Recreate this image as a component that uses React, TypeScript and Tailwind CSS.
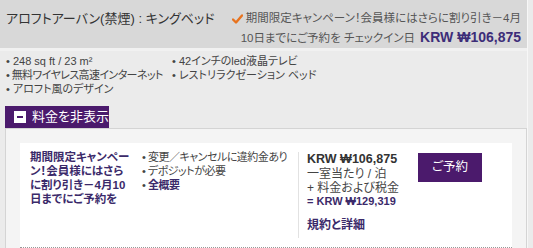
import React from "react";

const jp = "font-['Liberation_Sans','Noto_Sans_CJK_JP',sans-serif] [font-feature-settings:'palt']";

export default function App() {
  return (
    <div className={`w-[533px] h-[248px] overflow-hidden bg-[#ebebeb] text-[#333] ${jp}`}>
      <div className="w-[528px] h-full border-r border-[#f7f7f7]">
        {/* header */}
        <div className="h-[48px] bg-[#d8d8d8] flex justify-between pl-[6px] pr-[6px]">
          <div className="pt-[9px] text-[13px] whitespace-nowrap text-[#333]">アロフトアーバン(禁煙) : キングベッド</div>
          <div className="flex flex-col items-end pt-[9px] text-[11.5px] leading-[19px] text-[#555] whitespace-nowrap">
            <div className="flex items-center">
              <svg width="11" height="10" viewBox="0 0 11 10" className="mr-[3px]">
                <path d="M1 5.5 L4 8.5 L10 1.5" stroke="#e8731e" strokeWidth="2.4" fill="none" strokeLinecap="round" strokeLinejoin="round" />
              </svg>
              <span>期間限定キャンペーン！会員様にはさらに割り引き－4月</span>
            </div>
            <div className="flex items-baseline">
              <span>10日までにご予約を チェックイン日</span>
              <span className="ml-[5px] text-[14px] font-bold text-[#3d2d78]">KRW ₩106,875</span>
            </div>
          </div>
        </div>
        <div className="h-[3px] bg-[#f1f1f1]" />
        {/* features */}
        <div className="pl-[6px] pt-[3px] grid grid-cols-[166px_1fr] text-[11px] leading-[14px] text-[#444] whitespace-nowrap">
          <div>• 248 sq ft / 23 m²</div>
          <div>• 42インチのled液晶テレビ</div>
          <div className="tracking-[-0.6px]">• 無料ワイヤレス高速インターネット</div>
          <div>• レストリラクゼーション ベッド</div>
          <div>• アロフト風のデザイン</div>
        </div>
        {/* tab */}
        <div className="mt-[10px] ml-[5px] flex">
          <div className="w-[104px] h-[22px] bg-[#4b1a6c] flex items-center pl-[9px] gap-[6px]">
            <div className="w-[12px] h-[12px] bg-white flex items-center justify-center">
              <div className="w-[6px] h-[2px] bg-[#4b1a6c]" />
            </div>
            <span className="text-white text-[13px]">料金を非表示</span>
          </div>
        </div>
        {/* panel */}
        <div className="ml-[5px] border border-[#d4d4d4] bg-[#f4f4f4] pt-[14px] pl-[14px] pr-[14px]">
          <div className="bg-white border-b border-dotted border-[#999] h-[105px] flex pt-[7px]">
            <div className="w-[122px] pl-[10px] text-[11.5px] leading-[14px] font-bold text-[#3b2a6a] whitespace-nowrap">
              期間限定キャンペー<br />ン！会員様にはさら<br />に割り引き－4月10<br />日までにご予約を
            </div>
            <div className="w-[156px] text-[11px] leading-[14px] text-[#444] whitespace-nowrap tracking-[-0.5px]">
              <div>• 変更／キャンセルに違約金あり</div>
              <div>• デポジットが必要</div>
              <div>• <span className="font-bold text-[#3b2a6a]">全概要</span></div>
            </div>
            <div className="mt-[2px] h-[86px] border-l border-[#e2e2e2] pl-[8px] w-[120px] whitespace-nowrap">
              <div className="text-[12.5px] leading-[15px] font-bold text-[#333]">KRW ₩106,875</div>
              <div className="text-[12px] leading-[14px] text-[#444]">一室当たり / 泊</div>
              <div className="text-[12px] leading-[14px] text-[#444]">+ 料金および税金</div>
              <div className="text-[11px] leading-[13px] font-bold text-[#3b2a6a]">= KRW ₩129,319</div>
              <div className="mt-[10px] text-[12px] leading-[14px] font-bold text-[#3b2a6a]">規約と詳細</div>
            </div>
            <div className="pt-[3px]">
              <div className="w-[64px] h-[29px] bg-[#4b1a6c] text-white text-[12.5px] flex items-center justify-center">ご予約</div>
            </div>
          </div>
        </div>
      </div>
    </div>
  );
}
